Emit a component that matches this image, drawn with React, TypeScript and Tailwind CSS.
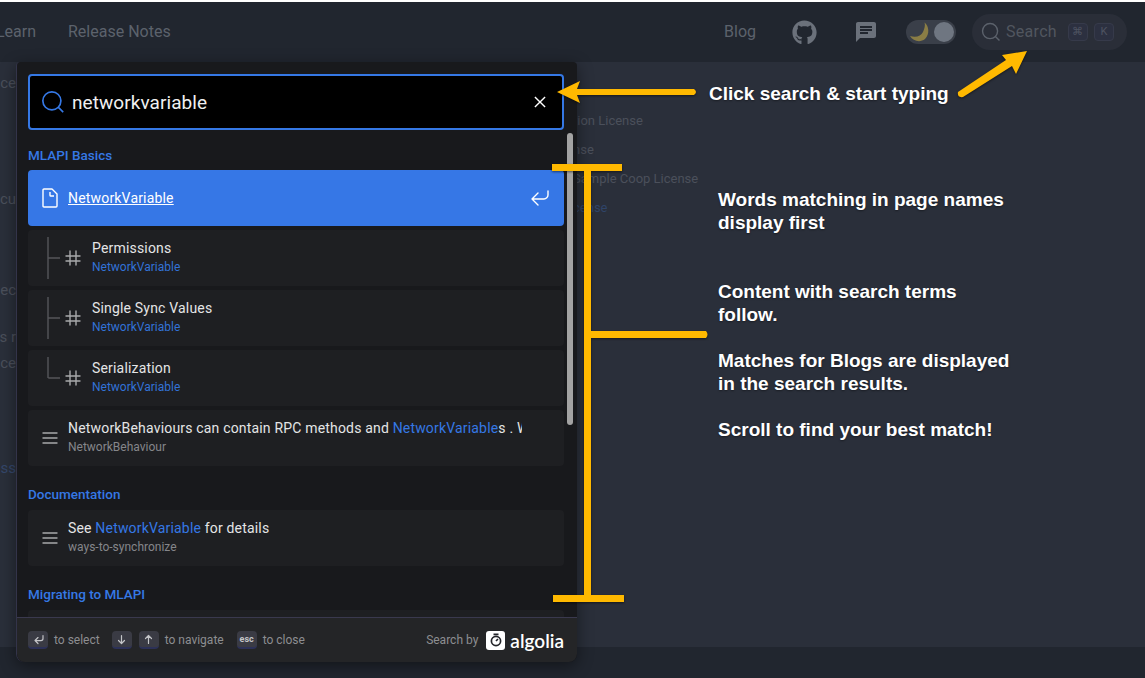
import { FaGithub } from "react-icons/fa";
import { MdChat } from "react-icons/md";
import { ReactNode } from "react";

const SearchIcon = ({ className }: { className: string }) => (
  <svg viewBox="0 0 20 20" className={className} fill="none" stroke="currentColor" strokeWidth="1.4">
    <path d="M14.386 14.386l4.0877 4.0877-4.0877-4.0877c-2.9418 2.9419-7.7115 2.9419-10.6533 0-2.9419-2.9418-2.9419-7.7115 0-10.6533 2.9418-2.9419 7.7115-2.9419 10.6533 0 2.9419 2.9418 2.9419 7.7115 0 10.6533z" />
  </svg>
);

const HashIcon = () => (
  <svg viewBox="0 0 20 20" className="w-5 h-5 shrink-0 text-[#a8a9ab]" fill="none" stroke="currentColor" strokeWidth="1.4" strokeLinejoin="round">
    <path d="M13 13h4-4V8H7v5h6v4-4H7V8H3h4V3v5h6V3v5h4-4v5zm-6 0v4-4H3h4z" />
  </svg>
);

const LinesIcon = () => (
  <svg viewBox="0 0 20 20" className="w-5 h-5 shrink-0 text-[#a8a9ab]" fill="none" stroke="currentColor" strokeWidth="1.4" strokeLinejoin="round">
    <path d="M17 5H3h14zm0 5H3h14zm0 5H3h14z" />
  </svg>
);

const TreeIcon = ({ last }: { last?: boolean }) => (
  <svg viewBox="0 0 24 54" className="w-6 h-[54px] shrink-0 text-[#55565a]" fill="none" stroke="currentColor" strokeWidth="1.4">
    <path d={last ? "M8 6v21M20 27H8.3" : "M8 6v42M20 27H8.3"} />
  </svg>
);

const SubHit = ({ title, last }: { title: string; last?: boolean }) => (
  <div className="h-14 rounded bg-[#1e1f22] flex items-center pl-3">
    <TreeIcon last={last} />
    <div className="-ml-px">
      <HashIcon />
    </div>
    <div className="ml-[9px] pb-[2px]">
      <div className="text-[14px] leading-[20px] tracking-[0.18px] text-[#e4e5e6]">{title}</div>
      <div className="text-[12px] leading-[18px] text-[#3272d6]">NetworkVariable</div>
    </div>
  </div>
);

const ContentHit = ({ sub, children }: { sub: string; children: ReactNode }) => (
  <div className="h-14 rounded bg-[#1e1f22] flex items-center pl-3">
    <LinesIcon />
    <div className="ml-2 w-[454px] overflow-hidden pb-[2px]">
      <div className="text-[14px] leading-[20px] tracking-[0.18px] text-[#e4e5e6] whitespace-nowrap">{children}</div>
      <div className="text-[12px] leading-[18px] text-[#85868a]">{sub}</div>
    </div>
  </div>
);

const GroupTitle = ({ children }: { children: ReactNode }) => (
  <div className="text-[13.5px] leading-[20px] font-medium text-[#3578e5]">{children}</div>
);

const Key = ({ children }: { children: ReactNode }) => (
  <span className="w-5 h-[18px] rounded-sm bg-[#3a3b44] border-b-2 border-[#2c3158] flex items-center justify-center text-[#c4c5c8]">
    {children}
  </span>
);

const KeyStroke = ({ d }: { d: string }) => (
  <svg viewBox="0 0 15 15" className="w-[15px] h-[15px]" fill="none" stroke="currentColor" strokeWidth="1.2" strokeLinecap="round" strokeLinejoin="round">
    <path d={d} />
  </svg>
);

const SearchModal = () => (
  <div className="absolute left-4 top-[62px] w-[561px] h-[600px] rounded-b-lg rounded-t-sm bg-[#18191c] border-l border-[#33344a] shadow-[0_4px_16px_rgba(0,0,0,0.45)] flex flex-col overflow-hidden">
    <div className="p-3 pb-0 pl-[11px]">
      <div className="h-14 w-[536px] rounded bg-black border-2 border-[#3578e5] flex items-center pl-[11px] pr-3">
        <SearchIcon className="w-6 h-6 text-[#3578e5]" />
        <span className="ml-[7px] mt-[2px] text-[19px] tracking-[0.07px] text-[#f0f0f0] flex-1">networkvariable</span>
        <svg viewBox="0 0 20 20" className="w-5 h-5 text-white" fill="none" stroke="currentColor" strokeWidth="1.4">
          <path d="M10 10l5.09-5.09L10 10l5.09 5.09L10 10zm0 0L4.91 4.91 10 10l-5.09 5.09L10 10z" />
        </svg>
      </div>
    </div>
    <div className="flex-1 relative overflow-hidden pl-[11px] pt-[15px] pr-3">
      <div className="w-[536px] flex flex-col">
        <GroupTitle>MLAPI Basics</GroupTitle>
        <div className="mt-[5px] flex flex-col gap-1">
          <div className="h-14 rounded bg-[#3677e6] flex items-center pl-3 pr-[14px] text-white">
            <svg viewBox="0 0 20 20" className="w-5 h-5 shrink-0" fill="none" stroke="currentColor" strokeWidth="1.4" strokeLinejoin="round">
              <path d="M17 6v12c0 .52-.2 1-1 1H4c-.7 0-1-.33-1-1V2c0-.55.42-1 1-1h8l5 5zM14 8h-3.13c-.51 0-.87-.34-.87-.87V4" />
            </svg>
            <span className="ml-2 text-[14px] tracking-[0.18px] underline flex-1">NetworkVariable</span>
            <svg viewBox="0 0 20 20" className="w-5 h-5" fill="none" stroke="currentColor" strokeWidth="1.4" strokeLinecap="round" strokeLinejoin="round">
              <path d="M18 3v4c0 2-2 4-4 4H2M8 17l-6-6 6-6" />
            </svg>
          </div>
          <SubHit title="Permissions" />
          <SubHit title="Single Sync Values" />
          <SubHit title="Serialization" last />
          <ContentHit sub="NetworkBehaviour">
            NetworkBehaviours can contain RPC methods and <span className="text-[#3578e5]">NetworkVariable</span>s . When
          </ContentHit>
        </div>
        <div className="mt-[18px]">
          <GroupTitle>Documentation</GroupTitle>
        </div>
        <div className="mt-[6px]">
          <ContentHit sub="ways-to-synchronize">
            See <span className="text-[#3578e5]">NetworkVariable</span> for details
          </ContentHit>
        </div>
        <div className="mt-[18px]">
          <GroupTitle>Migrating to MLAPI</GroupTitle>
        </div>
        <div className="mt-[6px] h-14 rounded bg-[#1e1f22]" />
      </div>
      {/* scrollbar */}
      <div className="absolute left-[550px] top-[3px] w-[6px] h-[292px] rounded-full bg-[#a3a3a3]" />
    </div>
    <div className="h-[45px] shrink-0 bg-[#242527] border-t border-[#3a394e] rounded-b-lg flex items-center pl-[11px] pr-3 text-[12px] text-[#8d8e91]">
      <Key><KeyStroke d="M12 3.53v3c0 1-1 2-2 2H4M7 11.53l-3-3 3-3" /></Key>
      <span className="ml-[6px]">to select</span>
      <span className="ml-3"><Key><KeyStroke d="M7.5 3.5v8M10.5 8.5l-3 3-3-3" /></Key></span>
      <span className="ml-[7px]"><Key><KeyStroke d="M7.5 11.5v-8M10.5 6.5l-3-3-3 3" /></Key></span>
      <span className="ml-[6px]">to navigate</span>
      <span className="ml-[13px]"><Key><span className="text-[9px] font-bold leading-none">esc</span></Key></span>
      <span className="ml-[6px]">to close</span>
      <span className="ml-auto">Search by</span>
      <div className="ml-[8px] w-[19px] h-[19px] rounded-[3px] bg-white flex items-center justify-center">
        <svg viewBox="0 0 16 16" className="w-4 h-4 text-[#24252a]" fill="none" stroke="currentColor" strokeWidth="1.7">
          <circle cx="8" cy="9" r="4.6" />
          <path d="M5.500 2.300h5M8 9l2-2" />
        </svg>
      </div>
      <span className="ml-[5px] mr-px text-[19px] leading-none font-semibold text-white font-['Lato',sans-serif]">algolia</span>
    </div>
  </div>
);

const Annotations = () => (
  <>
    <svg viewBox="0 0 1145 678" className="absolute inset-0 w-[1145px] h-[678px] pointer-events-none drop-shadow-[0_1px_1px_rgba(0,0,0,0.5)]">
      <g fill="#ffb900">
        <path d="M557 92 L580 81 L577 89 L694 89 Q698 92 694 95 L577 95 L580 103 Z" />
        <path d="M1027 51 L1016 74 L1012 66 L963 97 Q957 98 958 92 L1006 60 L1002 55 Z" />
        <rect x="552" y="164" width="70" height="7" />
        <rect x="584" y="171" width="7" height="426" />
        <rect x="553" y="595" width="71" height="7" />
        <path d="M591 331 H706 Q709 334.500 706 338 H591 Z" />
      </g>
    </svg>
    <div className="absolute left-[709px] top-[82px] text-[19px] leading-[23px] font-bold text-white font-['Liberation_Sans',sans-serif] whitespace-nowrap [text-shadow:0_1px_2px_rgba(0,0,0,0.4)]">
      Click search &amp; start typing
    </div>
    <div className="absolute left-[718px] top-[188px] text-[19px] leading-[23px] font-bold text-white font-['Liberation_Sans',sans-serif] whitespace-nowrap [text-shadow:0_1px_2px_rgba(0,0,0,0.4)]">
      <p>Words matching in page names<br />display first</p>
      <p className="mt-[46px]">Content with search terms<br />follow.</p>
      <p className="mt-[23px]">Matches for Blogs are displayed<br />in the search results.</p>
      <p className="mt-[23px]">Scroll to find your best match!</p>
    </div>
  </>
);

const App = () => {
  return (
    <div className="relative w-[1145px] h-[678px] overflow-hidden bg-white pt-[2px] font-['Roboto',sans-serif] flex flex-col">
      <header className="h-[60px] shrink-0 bg-[#21262f] flex items-center text-[16px] text-[#5c626c]">
        <span className="w-[36px] flex justify-end overflow-hidden whitespace-nowrap">Learn</span>
        <span className="ml-8">Release Notes</span>
        <span className="ml-auto">Blog</span>
        <FaGithub className="ml-9 w-[25px] h-[25px] text-[#6b717b]" />
        <MdChat className="ml-[37px] w-6 h-6 text-[#6b717b]" />
        <div className="ml-[28px] w-[50px] h-6 rounded-full bg-[#3a3f49] relative">
          <svg viewBox="0 0 26 24" className="absolute left-0 top-0 w-[26px] h-6 text-[#8a7d45]" fill="currentColor">
            <path d="M18.500 2.500C23 6 24 14 19 19C14 23 7 21 4 16C10 18 15 16 17 12C18.500 9 19.500 5 18.500 2.500Z" />
          </svg>
          <div className="absolute right-[2px] top-[2px] w-5 h-5 rounded-full bg-[#6f7681]" />
        </div>
        <div className="ml-4 mr-[18px] w-[155px] h-9 rounded-full bg-[#2a2e38] flex items-center pl-[9px]">
          <SearchIcon className="w-5 h-5 text-[#5c626c]" />
          <span className="ml-[5px] tracking-[0.3px] text-[#51565f]">Search</span>
          <span className="ml-[11px] w-5 h-[18px] rounded-sm border border-[#363a4a] bg-[#2c3040] flex items-center justify-center text-[11px] text-[#4e5360]">⌘</span>
          <span className="ml-[6px] w-5 h-[18px] rounded-sm border border-[#363a4a] bg-[#2c3040] flex items-center justify-center text-[11px] text-[#4e5360]">K</span>
        </div>
      </header>

      <main className="flex-1 bg-[#2a2f3a] flex text-[14px] text-[#4b505b]">
        <div className="w-4 pt-[11px] leading-5 flex flex-col items-end whitespace-nowrap">
          <span className="text-[15px]">ce</span>
          <span className="mt-[96px] text-[15px]">cu</span>
          <span className="mt-[71px] text-[15px]">jec</span>
          <span className="mt-[27px] text-[15px]">is r</span>
          <span className="mt-[6px] text-[15px]">ce</span>
          <span className="mt-[85px] text-[15px] text-[#34476b]">iss</span>
        </div>
        <div className="ml-[557px] pt-[44px] text-[13px] leading-[29px] whitespace-nowrap">
          <div>tion License</div>
          <div>nse</div>
          <div>Sample Coop License</div>
          <div className="text-[#2f4468]">cense</div>
        </div>
      </main>

      <footer className="h-[31px] shrink-0 bg-[#21262f]" />

      <SearchModal />
      <Annotations />
    </div>
  );
};

export default App;
